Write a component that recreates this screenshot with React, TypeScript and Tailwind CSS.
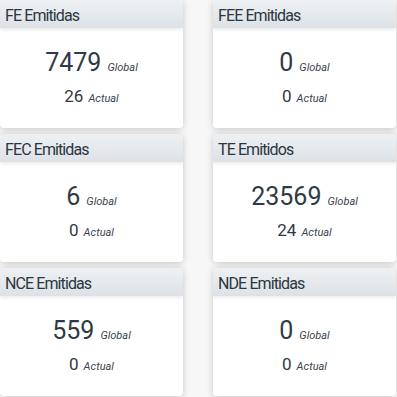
import React from "react";

const cards = [
  { title: "FE Emitidas", global: "7479", actual: "26" },
  { title: "FEE Emitidas", global: "0", actual: "0" },
  { title: "FEC Emitidas", global: "6", actual: "0" },
  { title: "TE Emitidos", global: "23569", actual: "24" },
  { title: "NCE Emitidas", global: "559", actual: "0" },
  { title: "NDE Emitidas", global: "0", actual: "0" },
];

function Card({ title, global, actual }: { title: string; global: string; actual: string }) {
  return (
    <div className="rounded-[4px] shadow-[0_1px_7px_rgba(0,0,0,0.2)] overflow-hidden">
      <div className="h-[28px] bg-gradient-to-b from-[#eef1f3] to-[#dde2e6] pl-[5px] pt-[6px] text-[16px] leading-[20px] tracking-[-0.9px] text-[#2c3641] shadow-[0_2px_3px_rgba(0,0,0,0.08)] relative z-10">
        {title}
      </div>
      <div className="h-[100px] bg-white flex flex-col items-center pt-[20px]">
        <div className="flex items-baseline text-[#2f3a46]">
          <span className="text-[25px] leading-[30px]">{global}</span>
          <span className="ml-[6px] text-[11px] italic text-[#3a4450]">Global</span>
        </div>
        <div className="flex items-baseline text-[#2f3a46] mt-[6px]">
          <span className="text-[17px] leading-[24px]">{actual}</span>
          <span className="ml-[5px] text-[11px] italic text-[#3a4450]">Actual</span>
        </div>
      </div>
    </div>
  );
}

export default function App() {
  return (
    <div
      className="w-[397px] h-[397px] overflow-hidden bg-[#f7f7f7]"
      style={{ fontFamily: "Roboto, 'Liberation Sans', sans-serif" }}
    >
      <div className="grid grid-cols-[183px_183px] gap-x-[30px] gap-y-[6px]">
        {cards.map((c) => (
          <Card key={c.title} {...c} />
        ))}
      </div>
    </div>
  );
}
